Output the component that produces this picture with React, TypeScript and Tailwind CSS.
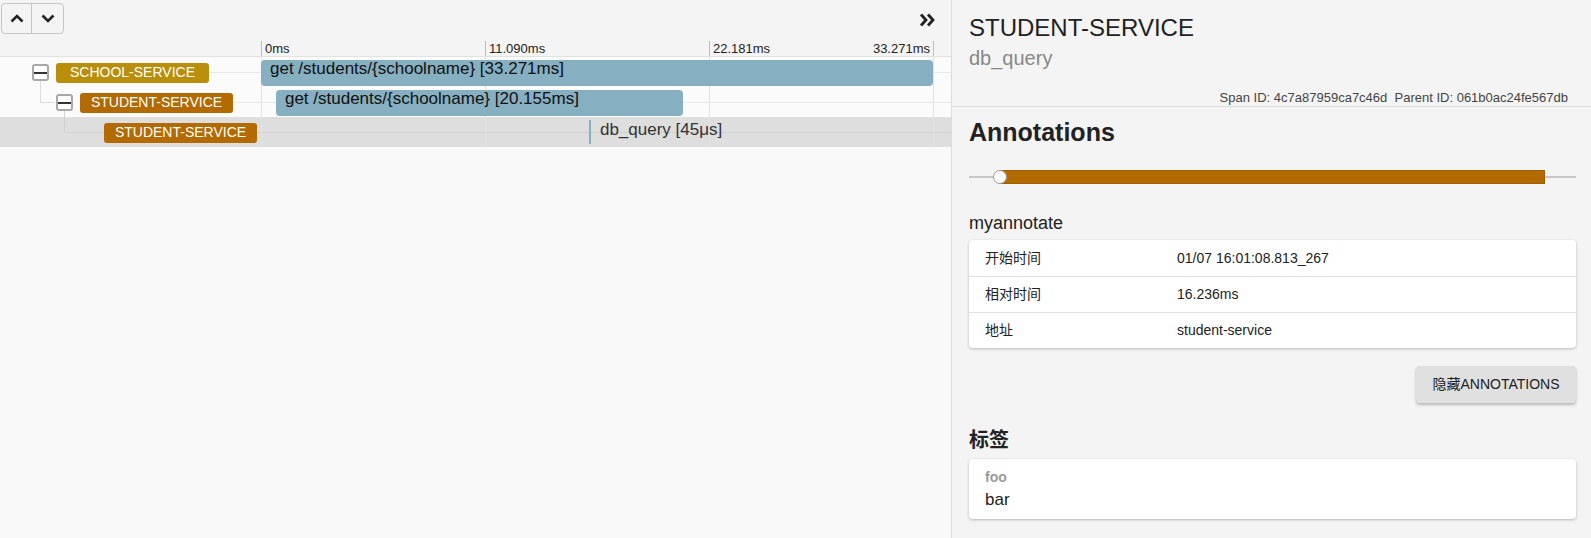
import React from 'react';

const TIMELINE_W = 672;
const TOTAL = 33.271;

const spans = [
  { id: 1, depth: 0, service: 'SCHOOL-SERVICE', color: 'bg-[#b88e0a]', name: 'get /students/{schoolname}', start: 0, dur: 33.271, label: '33.271ms', toggle: true },
  { id: 2, depth: 1, service: 'STUDENT-SERVICE', color: 'bg-[#b36a00]', name: 'get /students/{schoolname}', start: 0.74, dur: 20.155, label: '20.155ms', toggle: true },
  { id: 3, depth: 2, service: 'STUDENT-SERVICE', color: 'bg-[#b36a00]', name: 'db_query', start: 16.236, dur: 0.045, label: '45μs', toggle: false, selected: true },
];

const ticks = ['0ms', '11.090ms', '22.181ms', '33.271ms'];

const annotationRows = [
  ['开始时间', '01/07 16:01:08.813_267'],
  ['相对时间', '16.236ms'],
  ['地址', 'student-service'],
];

const Chevron = ({ up }: { up?: boolean }) => (
  <svg width="14" height="9" viewBox="0 0 14 9">
    <polyline
      points={up ? '1.5,7.5 7,2 12.5,7.5' : '1.5,1.5 7,7 12.5,1.5'}
      fill="none"
      stroke="#222"
      strokeWidth="2.6"
    />
  </svg>
);

const Toggle = () => (
  <div className="w-[17px] h-[17px] border-2 border-[#a8a8a8] rounded-[3px] bg-white flex items-center">
    <div className="w-full h-[2px] bg-[#333]" />
  </div>
);

const SpanRow = ({ s }: { s: typeof spans[number] }) => {
  const left = (s.start / TOTAL) * TIMELINE_W;
  const width = Math.max((s.dur / TOTAL) * TIMELINE_W, 2);
  const indent = 32 + s.depth * 24;
  const badgeEnd = indent + 17 + 7 + 153;
  return (
    <div className={`relative h-[30px] flex ${s.selected ? 'bg-[#dedede]' : 'bg-[#fbfbfb]'}`}>
      <div
        className={`absolute right-0 top-[15px] h-px ${s.selected ? 'bg-[#cfcfcf]' : 'bg-[#e8e8e8]'}`}
        style={{ left: badgeEnd }}
      />
      <div className="relative w-[261px] shrink-0 flex items-center pt-[1px]" style={{ paddingLeft: indent }}>
        {s.toggle ? <Toggle /> : <div className="w-[17px]" />}
        <div className={`relative ml-[7px] w-[153px] h-[20px] rounded-[3px] ${s.color} text-white text-[14px] flex items-center justify-center`}>
          {s.service}
        </div>
      </div>
      <div className="relative w-[673px] shrink-0">
        {/* grid lines under the bars */}
        <div className="absolute inset-0 flex">
          <div className="w-[224px] border-l border-[#e2e2e2]" />
          <div className="w-[224px] border-l border-[#e2e2e2]" />
          <div className="w-[224px] border-l border-[#e2e2e2]" />
          <div className="w-px bg-[#e2e2e2]" />
        </div>
        {s.dur > 1 ? (
          <div
            className="absolute top-[3px] h-[26px] rounded-[4px] bg-[#86afc1] text-[#111] text-[17px] leading-[18px] pl-[9px] whitespace-nowrap"
            style={{ left, width }}
          >
            {s.name} [{s.label}]
          </div>
        ) : (
          <div className="absolute top-[3px] h-[26px] flex items-start" style={{ left }}>
            <div className="w-[2px] h-[24px] bg-[#86afc1]" />
            <span className="ml-[9px] text-[17px] leading-[20px] text-[#333] whitespace-nowrap">
              {s.name} [{s.label}]
            </span>
          </div>
        )}
      </div>
    </div>
  );
};

export default function App() {
  return (
    <div className="flex w-[1591px] h-[538px] overflow-hidden bg-[#f4f4f4] font-['Liberation_Sans','Noto_Sans_CJK_SC',sans-serif]">
      {/* trace timeline */}
      <div className="w-[952px] shrink-0 bg-[#f9f9f9] border-r border-[#dcdcdc] flex flex-col">
        <div className="h-[57px] bg-[#f4f4f4] border-b border-[#e2e2e2] relative">
          <div className="flex items-start justify-between pl-[1px] pr-[16px] pt-[3px]">
            <div className="flex h-[31px] border border-[#c6c6c6] rounded-[4px]">
              <button className="w-[30px] flex items-center justify-center border-r border-[#c6c6c6]">
                <Chevron up />
              </button>
              <button className="w-[31px] flex items-center justify-center">
                <Chevron />
              </button>
            </div>
            <svg width="16" height="14" viewBox="0 0 16 14" className="mt-[10px]">
              <polyline points="2,1.5 7,7 2,12.5" fill="none" stroke="#222" strokeWidth="2.8" />
              <polyline points="9,1.5 14,7 9,12.5" fill="none" stroke="#222" strokeWidth="2.8" />
            </svg>
          </div>
          <div className="absolute left-[261px] bottom-0 w-[673px] h-[15px] flex text-[13px] leading-[15px] text-[#222]">
            {ticks.slice(0, 3).map(t => (
              <div key={t} className="w-[224px] border-l border-[#bdbdbd] pl-[3px]">{t}</div>
            ))}
            <div className="absolute right-0 top-0 h-[15px] border-r border-[#bdbdbd] pr-[3px]">{ticks[3]}</div>
          </div>
        </div>

        <div className="relative">
          {spans.map(s => (
            <SpanRow key={s.id} s={s} />
          ))}
          {/* tree connectors */}
          <div className="absolute left-[40px] top-[24px] w-px h-[21px] bg-[#dcdcdc]" />
          <div className="absolute left-[40px] top-[45px] w-[15px] h-px bg-[#dcdcdc]" />
          <div className="absolute left-[64px] top-[54px] w-px h-[21px] bg-[#d0d0d0]" />
          <div className="absolute left-[64px] top-[75px] w-[40px] h-px bg-[#d2d2d2]" />
        </div>
      </div>

      {/* span detail */}
      <div className="flex-1">
        <div className="h-[107px] border-b border-[#dedede] pl-[17px] pr-[23px] pt-[14px]">
          <div className="text-[24px] leading-[28px] text-[#222]">STUDENT-SERVICE</div>
          <div className="text-[20px] leading-[24px] text-[#888] mt-[4px]">db_query</div>
          <div className="text-right text-[13px] leading-[16px] text-[#444] mt-[20px]">
            Span ID: 4c7a87959ca7c46d&nbsp;&nbsp;Parent ID: 061b0ac24fe567db
          </div>
        </div>

        <div className="pl-[17px] pr-[15px]">
          <div className="text-[25px] font-bold text-[#222] leading-[28px] mt-[11px]">Annotations</div>

          <div className="relative h-[16px] mt-[23px]">
            <div className="absolute left-0 right-0 top-[7px] h-[2px] bg-[#c8c8c8]" />
            <div className="absolute left-[30px] right-[31px] top-[1px] h-[14px] bg-[#b36a00] border border-[#a05f00]" />
            <div className="absolute left-[24px] top-[1px] w-[14px] h-[14px] rounded-full bg-white border border-[#999]" />
          </div>

          <div className="text-[18px] leading-[22px] text-[#222] mt-[27px]">myannotate</div>
          <div className="mt-[6px] bg-white rounded-[4px] shadow-[0_1px_3px_rgba(0,0,0,0.25)] text-[14px] text-[#222]">
            {annotationRows.map(([k, v], i) => (
              <div key={k} className={`flex h-[36px] items-center ${i > 0 ? 'border-t border-[#e0e0e0]' : ''}`}>
                <div className="w-[208px] pl-[16px]">{k}</div>
                <div>{v}</div>
              </div>
            ))}
          </div>

          <div className="flex justify-end mt-[18px]">
            <button className="w-[160px] h-[37px] rounded-[4px] bg-[#e0e0e0] shadow-[0_2px_3px_rgba(0,0,0,0.25)] text-[14px] text-[#222]">
              隐藏ANNOTATIONS
            </button>
          </div>

          <div className="text-[20px] font-bold text-[#222] leading-[26px] mt-[24px]">标签</div>
          <div className="mt-[6px] bg-white rounded-[4px] shadow-[0_1px_3px_rgba(0,0,0,0.25)] px-[16px] pt-[10px] h-[60px]">
            <div className="text-[14px] leading-[16px] font-bold text-[#9a9a9a]">foo</div>
            <div className="text-[17px] leading-[20px] text-[#222] mt-[5px]">bar</div>
          </div>
        </div>
      </div>
    </div>
  );
}
